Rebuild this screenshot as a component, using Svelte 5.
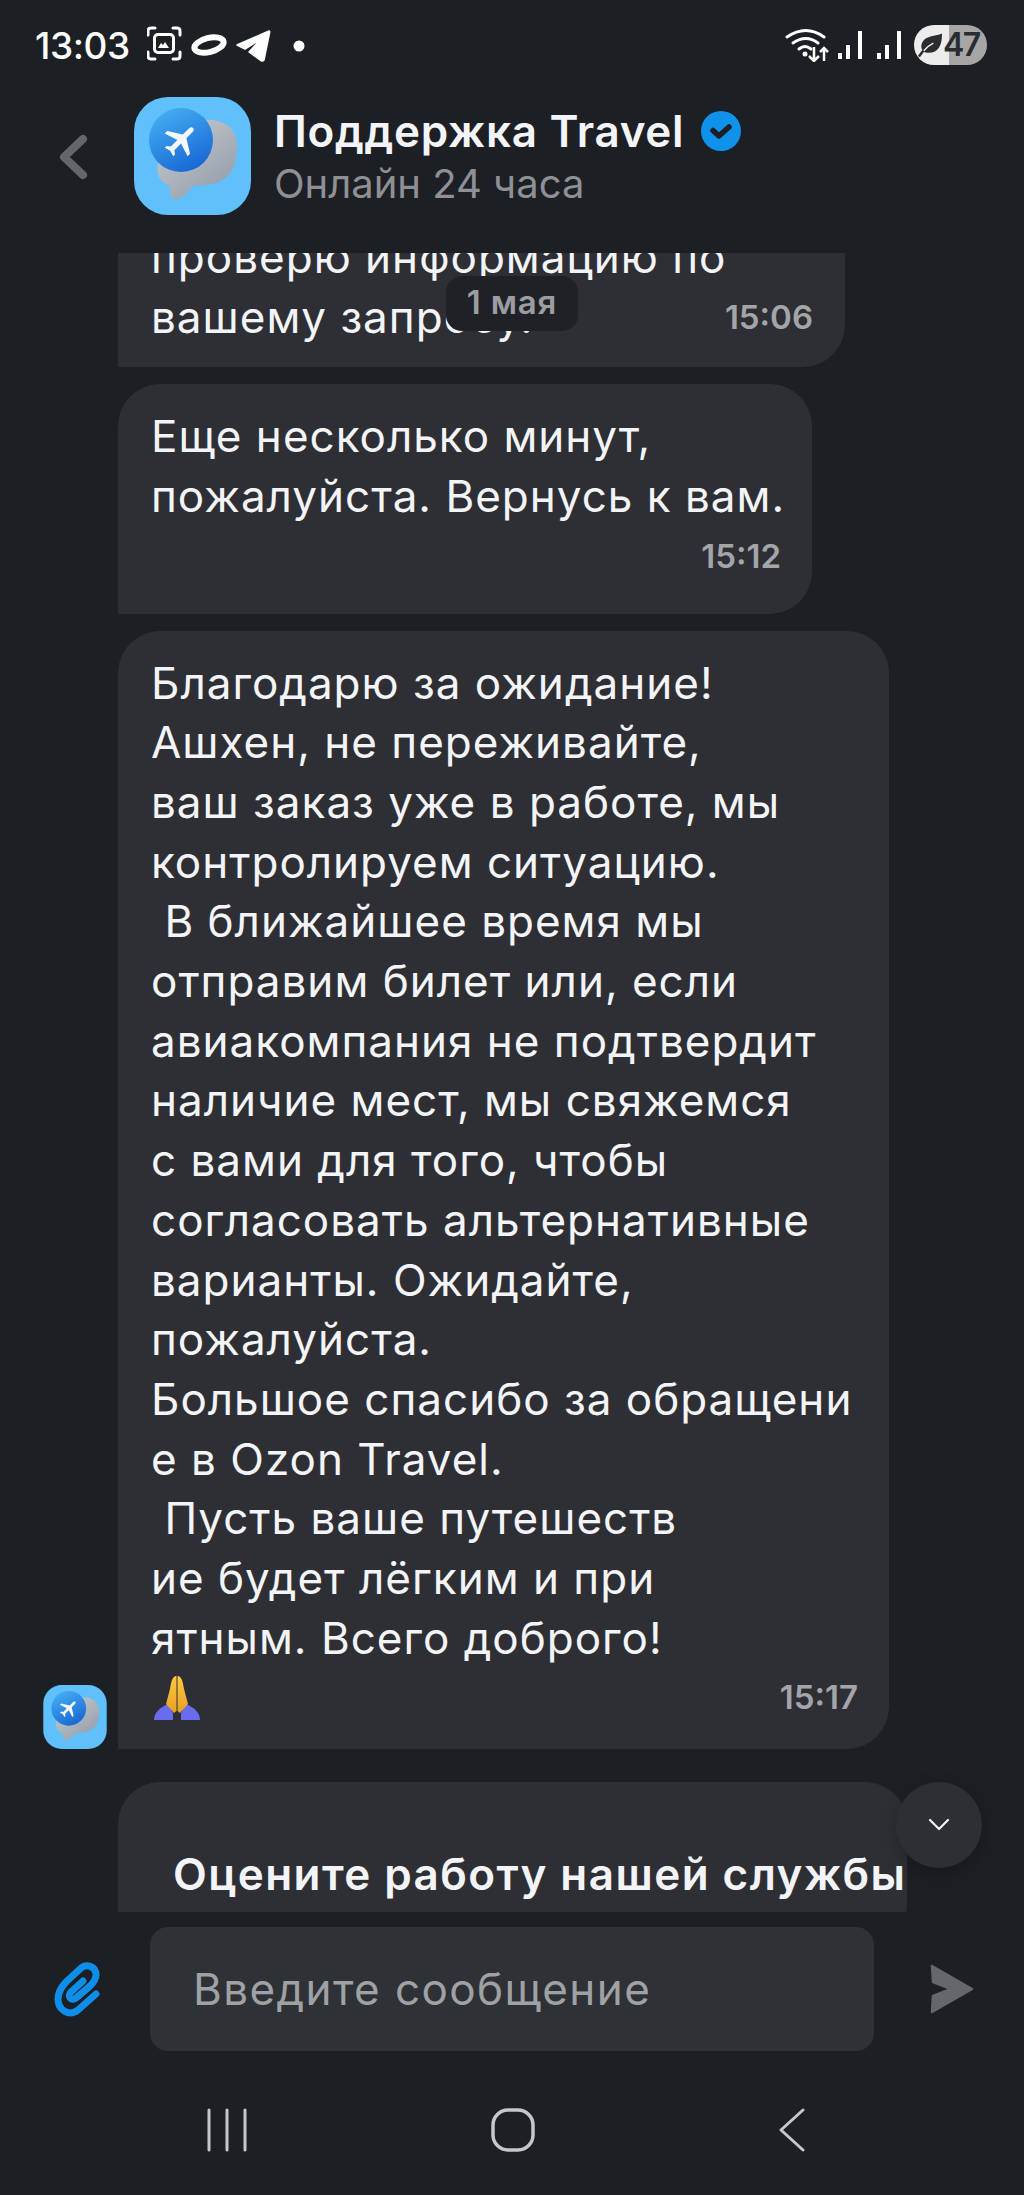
<script>
  const lines = [
    'Благодарю за ожидание!',
    'Ашхен, не переживайте,',
    'ваш заказ уже в работе, мы',
    'контролируем ситуацию.',
    '\u00a0В ближайшее время мы',
    'отправим билет или, если',
    'авиакомпания не подтвердит',
    'наличие мест, мы свяжемся',
    'с вами для того, чтобы',
    'согласовать альтернативные',
    'варианты. Ожидайте,',
    'пожалуйста.',
    'Большое спасибо за обращени',
    'е в Ozon Travel.',
    '\u00a0Пусть ваше путешеств',
    'ие будет лёгким и при',
    'ятным. Всего доброго!'
  ];
</script>

{#snippet logo()}
  <svg class="logo-svg" viewBox="0 0 117 118" aria-hidden="true">
    <defs>
      <linearGradient id="gr" x1="0.1" y1="0" x2="0.9" y2="1">
        <stop offset="0" stop-color="#c9ccd2"/><stop offset="1" stop-color="#8f9aa6"/>
      </linearGradient>
      <linearGradient id="bl" x1="0.2" y1="0" x2="0.7" y2="1">
        <stop offset="0" stop-color="#45b0f2"/><stop offset="1" stop-color="#1766d4"/>
      </linearGradient>
    </defs>
    <rect width="117" height="118" rx="34" fill="#5fc0fb"/>
    <path d="M68 23 C88 21 103 29 103 50 C103 76 90 88 68 88 L58 89 C54 96 47 103 40 102 C35 101 36 93 36 89 C26 86 22 78 24 66 Z" fill="url(#gr)"/>
    <circle cx="47" cy="43" r="32" fill="url(#bl)"/>
    <g transform="translate(47 43) rotate(45) scale(1.7) translate(-11.5 -12)">
      <path d="M21 16v-2l-8-5V3.5c0-.83-.67-1.5-1.5-1.5S10 2.67 10 3.5V9l-8 5v2l8-2.5V19l-2 1.5V22l3.5-1 3.5 1v-1.5L13 19v-5.5l8 2.5z" fill="#f4f7fb"/>
    </g>
  </svg>
{/snippet}

<div class="screen">
  <div class="status">
    <span class="clock">13:03</span>
    <svg class="notif" width="160" height="40" viewBox="0 0 160 40" aria-hidden="true">
      <g fill="none" stroke="#fff" stroke-width="3" stroke-linecap="round" stroke-linejoin="round">
        <path d="M1 9V5q0-3 3-3h4M26 2h4q3 0 3 3v4M33 26v4q0 3-3 3h-4M8 33H4q-3 0-3-3v-4"/>
        <rect x="7.5" y="8.5" width="19" height="18" rx="3.5"/>
      </g>
      <path d="M11 22l3-5 2 2 2-3 4 6z" fill="#fff"/>
      <ellipse cx="62" cy="19" rx="15" ry="7" fill="none" stroke="#fff" stroke-width="6" transform="rotate(-14 62 19)"/>
      <path d="M90 19 L122 5 Q123 5 122.500 7 L117 34 Q115 36 113 34 L102 26 L114 13 L98 23 Z" fill="#fff" stroke="#fff" stroke-width="1.500" stroke-linejoin="round"/>
      <circle cx="152" cy="20" r="5.500" fill="#fff"/>
    </svg>
    <div class="sys">
      <svg width="80" height="34" viewBox="0 0 80 34" aria-hidden="true">
        <g fill="none" stroke="#fff" stroke-width="3" stroke-linecap="round">
          <path d="M2 9 Q21 -4 39 9"/>
          <path d="M8 15 Q21 6 33 15"/>
          <path d="M14 21 Q20 16 26 21"/>
        </g>
        <circle cx="20" cy="26" r="2.500" fill="#fff"/>
        <g fill="none" stroke="#fff" stroke-width="2.500">
          <path d="M29 19V33M24 28l5 5 5-5"/>
          <path d="M39 20V33M35 24l4-4 4 4"/>
        </g>
        <rect x="53" y="25" width="4" height="6" fill="#fff"/>
        <rect x="61" y="17" width="4" height="14" fill="#fff"/>
        <rect x="73" y="3" width="4" height="28" fill="#fff"/>
      </svg>
      <svg class="sig" width="28" height="34" viewBox="0 0 28 34" aria-hidden="true">
        <rect x="1" y="25" width="4" height="6" fill="#fff"/>
        <rect x="9" y="17" width="4" height="14" fill="#fff"/>
        <rect x="21" y="3" width="4" height="28" fill="#fff"/>
      </svg>
      <div class="batt">
        <svg class="leaf" width="25" height="26" viewBox="0 0 26 26" aria-hidden="true">
          <path d="M25 1 C25 14 21 22 9 21 C2 20 2 11 7 7 C12 3 18 4 25 1Z" fill="#2a2c30"/>
          <path d="M1 25 C5 19 9 15 15 11" fill="none" stroke="#2a2c30" stroke-width="2.500"/>
          <path d="M6 19 C9 15 12 13 16 11" fill="none" stroke="#e9e9e9" stroke-width="1.500"/>
        </svg>
        <span class="lvl">47</span>
      </div>
    </div>
  </div>

  <header class="head">
    <svg class="back" width="30" height="46" viewBox="0 0 30 46" aria-hidden="true">
      <path d="M25 5 L6 23 L25 41" fill="none" stroke="#64666c" stroke-width="8" stroke-linecap="round" stroke-linejoin="round"/>
    </svg>
    <div class="avatar-lg">{@render logo()}</div>
    <div class="who">
      <div class="name">
        <span>Поддержка Travel</span>
        <svg width="40" height="40" viewBox="0 0 40 40" aria-hidden="true">
          <circle cx="20" cy="20" r="20" fill="#0f93ea"/>
          <path d="M12 19.500 L18 25 L28 16" fill="none" stroke="#1c1f24" stroke-width="5.500" stroke-linecap="round" stroke-linejoin="round"/>
        </svg>
      </div>
      <div class="online">Онлайн 24 часа</div>
    </div>
  </header>

  <main class="chat">
    <div class="feed">
      <div class="row">
        <div class="slot"></div>
        <div class="bubble b1">
          <div>проверю информацию по</div>
          <div class="last"><span>вашему запросу.</span><time>15:06</time></div>
        </div>
      </div>
      <div class="row">
        <div class="slot"></div>
        <div class="bubble b2">
          <div>Еще несколько минут,</div>
          <div>пожалуйста. Вернусь к вам.</div>
          <div class="last end"><time>15:12</time></div>
        </div>
      </div>
      <div class="row">
        <div class="slot avatar-sm">{@render logo()}</div>
        <div class="bubble b3">
          {#each lines as l}
            <div>{l}</div>
          {/each}
          <div class="last">
            <svg class="pray" width="48" height="46" viewBox="0 0 48 46" aria-hidden="true">
              <defs>
                <linearGradient id="hand" x1="0" y1="0" x2="0" y2="1">
                  <stop offset="0" stop-color="#ffc83d"/><stop offset="1" stop-color="#e8a02a"/>
                </linearGradient>
              </defs>
              <path d="M1 45 C1 37 8 32 15 29 L20 38 L20 45Z" fill="#6a6cf0"/>
              <path d="M47 45 C47 37 40 32 33 29 L28 38 L28 45Z" fill="#6a6cf0"/>
              <path d="M23.500 1 C19 1 18 8 17 14 L13 29 L21 38 L23.500 36Z" fill="url(#hand)"/>
              <path d="M24.500 1 C29 1 30 8 31 14 L35 29 L27 38 L24.500 36Z" fill="url(#hand)"/>
            </svg>
            <time>15:17</time>
          </div>
        </div>
      </div>
      <div class="row rate-row">
        <div class="slot"></div>
        <div class="bubble b4">Оцените работу нашей службы</div>
      </div>
    </div>
    <div class="date">1 мая</div>
    <button class="down" aria-label="Вниз">
      <svg width="22" height="14" viewBox="0 0 22 14" aria-hidden="true">
        <path d="M2 2 L11 11 L20 2" fill="none" stroke="#f2f3f5" stroke-width="2.200" stroke-linecap="round" stroke-linejoin="round"/>
      </svg>
    </button>
  </main>

  <div class="composer">
    <svg width="48" height="56" viewBox="0 0 48 56" aria-hidden="true">
      <path d="M43 33 L25 49 C16 56 5 49 5 38 C5 31 9 25 14 20 L27 8 C33 2 43 5 43 14 C43 19 40 22 37 25 L23 37 C18 41 14 35 18 31 L30 20" fill="none" stroke="#0f8ee9" stroke-width="7" stroke-linecap="round" stroke-linejoin="round"/>
    </svg>
    <div class="field">Введите сообщение</div>
    <svg width="44" height="50" viewBox="0 0 44 50" aria-hidden="true">
      <path d="M2 2 L42 25 L2 48 L3 32 L21 25 L3 18 Z" fill="#66676d" stroke="#66676d" stroke-width="2.500" stroke-linejoin="round"/>
    </svg>
  </div>

  <nav class="nav">
    <svg width="42" height="44" viewBox="0 0 42 44" aria-hidden="true">
      <path d="M3 2V42M21 2V42M39 2V42" stroke="#c6c7c9" stroke-width="3" stroke-linecap="round"/>
    </svg>
    <svg width="44" height="44" viewBox="0 0 44 44" aria-hidden="true">
      <rect x="2" y="2" width="40" height="40" rx="15" fill="none" stroke="#c6c7c9" stroke-width="3.500"/>
    </svg>
    <svg width="28" height="44" viewBox="0 0 28 44" aria-hidden="true">
      <path d="M25 2 L3 22 L25 42" fill="none" stroke="#c6c7c9" stroke-width="3" stroke-linecap="round" stroke-linejoin="round"/>
    </svg>
  </nav>
</div>

<style>
  :global(body) {
    margin: 0;
    background: #1c1f24;
  }
  .screen {
    width: 1024px;
    height: 2195px;
    background: #1c1f24;
    color: #f3f4f7;
    font-family: Inter, "Noto Sans", sans-serif;
    display: flex;
    flex-direction: column;
    overflow: hidden;
  }
  .status {
    height: 90px;
    display: flex;
    align-items: center;
    padding: 0 37px 0 35px;
    box-sizing: border-box;
  }
  .clock {
    font-size: 37px;
    font-weight: 500;
    color: #fff;
    letter-spacing: -0.4px;
    width: 112px;
  }
  .notif {
    margin-top: 2px;
  }
  .sys {
    margin-left: auto;
    display: flex;
    align-items: center;
  }
  .sig {
    margin-left: 11px;
  }
  .batt {
    width: 73px;
    height: 40px;
    border-radius: 20px;
    margin-left: 10px;
    background: linear-gradient(90deg, #ececec 0 35px, #a6a6a6 35px);
    display: flex;
    align-items: center;
    padding-left: 4px;
    box-sizing: border-box;
    color: #2a2c30;
  }
  .lvl {
    font-size: 32px;
    font-weight: 600;
    letter-spacing: -1.5px;
    line-height: 1;
  }
  .leaf {
    flex: none;
  }
  .head {
    height: 163px;
    display: flex;
    align-items: flex-start;
    padding-left: 58px;
    box-sizing: border-box;
  }
  .back {
    margin-top: 44px;
  }
  .avatar-lg {
    width: 117px;
    height: 118px;
    margin: 7px 0 0 46px;
  }
  .logo-svg {
    display: block;
    width: 100%;
    height: 100%;
  }
  .who {
    margin: 13px 0 0 23px;
  }
  .name {
    display: flex;
    align-items: center;
    gap: 17px;
    font-size: 44px;
    font-weight: 600;
    letter-spacing: 0.7px;
    line-height: 56px;
    height: 56px;
  }
  .online {
    font-size: 40px;
    line-height: 54px;
    margin-top: -2px;
    color: #8e9095;
  }
  .chat {
    height: 1659px;
    position: relative;
    overflow: hidden;
    flex: none;
  }
  .feed {
    margin-top: -48px;
    display: flex;
    flex-direction: column;
    gap: 17px;
  }
  .row {
    display: flex;
    align-items: flex-end;
    gap: 11px;
    padding-left: 43px;
  }
  .rate-row {
    margin-top: 16px;
  }
  .slot {
    width: 64px;
    flex: none;
  }
  .avatar-sm {
    height: 64px;
  }
  .bubble {
    background: #2e2f34;
    border-radius: 42px 42px 42px 0;
    box-sizing: border-box;
    padding: 23px 32px 20px 33px;
    font-size: 44px;
    letter-spacing: 1px;
    line-height: 59.7px;
    white-space: nowrap;
    flex: none;
  }
  .b1 {
    width: 727px;
  }
  .b2 {
    width: 694px;
    padding-right: 31px;
    padding-bottom: 27px;
  }
  .b3 {
    width: 771px;
    padding-right: 31px;
    padding-bottom: 21px;
  }
  .b4 {
    width: 789px;
    padding: 63px 0 40px 55px;
    font-size: 44px;
    font-weight: 600;
    letter-spacing: 1.45px;
  }
  .last {
    display: flex;
    justify-content: space-between;
    align-items: center;
  }
  .end {
    justify-content: flex-end;
  }
  time {
    font-size: 33px;
    font-weight: 600;
    letter-spacing: 0;
    color: #a3a5a9;
  }
  .pray {
    display: block;
    margin-left: 2px;
  }
  .date {
    position: absolute;
    left: 446px;
    top: 23px;
    width: 132px;
    height: 55px;
    padding-bottom: 3px;
    box-sizing: border-box;
    border-radius: 16px;
    background: #1f2126;
    color: #9b9da1;
    font-size: 33px;
    font-weight: 600;
    letter-spacing: 0.8px;
    display: flex;
    align-items: center;
    justify-content: center;
  }
  .down {
    position: absolute;
    left: 896px;
    top: 1529px;
    width: 86px;
    height: 86px;
    border-radius: 50%;
    border: 0;
    padding: 0;
    background: #2e2f34;
    box-shadow: 0 6px 18px rgba(0, 0, 0, 0.22);
    display: flex;
    align-items: center;
    justify-content: center;
  }
  .composer {
    display: flex;
    align-items: center;
    height: 124px;
    margin-top: 15px;
    padding-left: 53px;
    flex: none;
  }
  .field {
    width: 724px;
    height: 124px;
    margin: 0 56px 0 49px;
    padding-left: 43px;
    box-sizing: border-box;
    background: #2e3135;
    border-radius: 18px;
    display: flex;
    align-items: center;
    font-size: 44px;
    letter-spacing: 1.4px;
    color: #9fa1a4;
    flex: none;
  }
  .nav {
    display: flex;
    align-items: center;
    height: 44px;
    margin-top: 57px;
    padding-left: 206px;
    gap: 243px;
  }
</style>
